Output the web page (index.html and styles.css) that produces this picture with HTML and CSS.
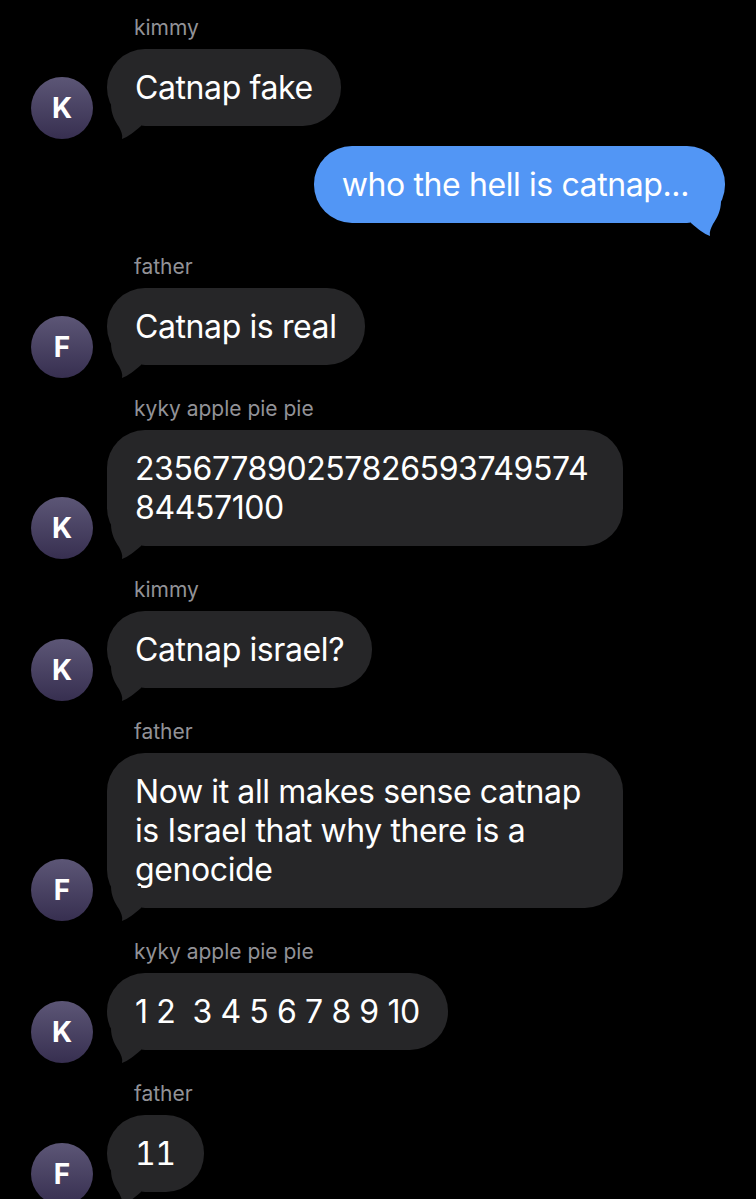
FILE: index.html
```html
<!DOCTYPE html>
<html lang="en">
<head>
<meta charset="utf-8">
<title>Messages</title>
<link rel="stylesheet" href="styles.css">
</head>
<body>
<main class="thread">
  <div class="msg in">
    <div class="avatar">K</div>
    <div class="stack">
      <div class="name">kimmy</div>
      <div class="bubble">Catnap fake<svg class="tail" viewBox="0 0 40 35"><path d="M4 0C4 10 8 17 12 23C14 27 16 31 15 35C21 33 27 28 34 22L34 0Z"/></svg></div>
    </div>
  </div>

  <div class="msg out">
    <div class="bubble sent">who the hell is catnap...<svg class="tail" viewBox="0 0 40 35"><path d="M4 0C4 10 8 17 12 23C14 27 16 31 15 35C21 33 27 28 34 22L34 0Z"/></svg></div>
  </div>

  <div class="msg in">
    <div class="avatar">F</div>
    <div class="stack">
      <div class="name">father</div>
      <div class="bubble">Catnap is real<svg class="tail" viewBox="0 0 40 35"><path d="M4 0C4 10 8 17 12 23C14 27 16 31 15 35C21 33 27 28 34 22L34 0Z"/></svg></div>
    </div>
  </div>

  <div class="msg in">
    <div class="avatar">K</div>
    <div class="stack">
      <div class="name">kyky apple pie pie</div>
      <div class="bubble">23567789025782659374957484457100<svg class="tail" viewBox="0 0 40 35"><path d="M4 0C4 10 8 17 12 23C14 27 16 31 15 35C21 33 27 28 34 22L34 0Z"/></svg></div>
    </div>
  </div>

  <div class="msg in">
    <div class="avatar">K</div>
    <div class="stack">
      <div class="name">kimmy</div>
      <div class="bubble">Catnap israel?<svg class="tail" viewBox="0 0 40 35"><path d="M4 0C4 10 8 17 12 23C14 27 16 31 15 35C21 33 27 28 34 22L34 0Z"/></svg></div>
    </div>
  </div>

  <div class="msg in">
    <div class="avatar">F</div>
    <div class="stack">
      <div class="name">father</div>
      <div class="bubble">Now it all makes sense catnap is Israel that why there is a genocide<svg class="tail" viewBox="0 0 40 35"><path d="M4 0C4 10 8 17 12 23C14 27 16 31 15 35C21 33 27 28 34 22L34 0Z"/></svg></div>
    </div>
  </div>

  <div class="msg in">
    <div class="avatar">K</div>
    <div class="stack">
      <div class="name">kyky apple pie pie</div>
      <div class="bubble">1 2&nbsp; 3 4 5 6 7 8 9 10<svg class="tail" viewBox="0 0 40 35"><path d="M4 0C4 10 8 17 12 23C14 27 16 31 15 35C21 33 27 28 34 22L34 0Z"/></svg></div>
    </div>
  </div>

  <div class="msg in">
    <div class="avatar">F</div>
    <div class="stack">
      <div class="name">father</div>
      <div class="bubble tnum">11<svg class="tail" viewBox="0 0 40 35"><path d="M4 0C4 10 8 17 12 23C14 27 16 31 15 35C21 33 27 28 34 22L34 0Z"/></svg></div>
    </div>
  </div>
</main>
</body>
</html>
```

FILE: styles.css
```css
* {
  box-sizing: border-box;
}

html, body {
  margin: 0;
  background: #000;
}

body {
  font-family: Inter, "Noto Sans", "Liberation Sans", sans-serif;
  color: #fff;
  overflow: hidden;
}

.thread {
  display: flex;
  flex-direction: column;
  padding: 16px 31px 0 31px;
}

.msg.in {
  display: flex;
  align-items: flex-end;
  gap: 14px;
  margin-top: 19px;
}

.msg.in:first-child {
  margin-top: 0;
}

.msg.out {
  display: flex;
  justify-content: flex-end;
  margin-top: 7px;
  padding-bottom: 13px;
}

.stack {
  display: flex;
  flex-direction: column;
  align-items: flex-start;
  padding-bottom: 13px;
  min-width: 0;
}

.name {
  font-size: 21px;
  line-height: 24px;
  color: #929297;
  margin: 0 0 9px 27px;
}

.avatar {
  flex: none;
  width: 62px;
  height: 62px;
  border-radius: 50%;
  background: linear-gradient(180deg, #5c5676 0%, #372f50 100%);
  display: flex;
  align-items: center;
  justify-content: center;
  font-size: 28px;
  font-weight: 700;
  color: #fff;
}

.bubble {
  position: relative;
  background: #262628;
  color: #fff;
  border-radius: 38px;
  padding: 19px 28px;
  font-size: 32px;
  line-height: 39px;
  letter-spacing: -0.4px;
  max-width: 516px;
  overflow-wrap: anywhere;
}

.bubble.tnum {
  font-variant-numeric: tabular-nums;
}

.bubble .tail {
  position: absolute;
  left: 0;
  bottom: -13px;
  width: 40px;
  height: 35px;
  fill: #262628;
}

.bubble.sent {
  background: #5296f5;
  padding-right: 36px;
}

.bubble.sent .tail {
  left: auto;
  right: 0;
  transform: scaleX(-1);
  fill: #5296f5;
}
```
